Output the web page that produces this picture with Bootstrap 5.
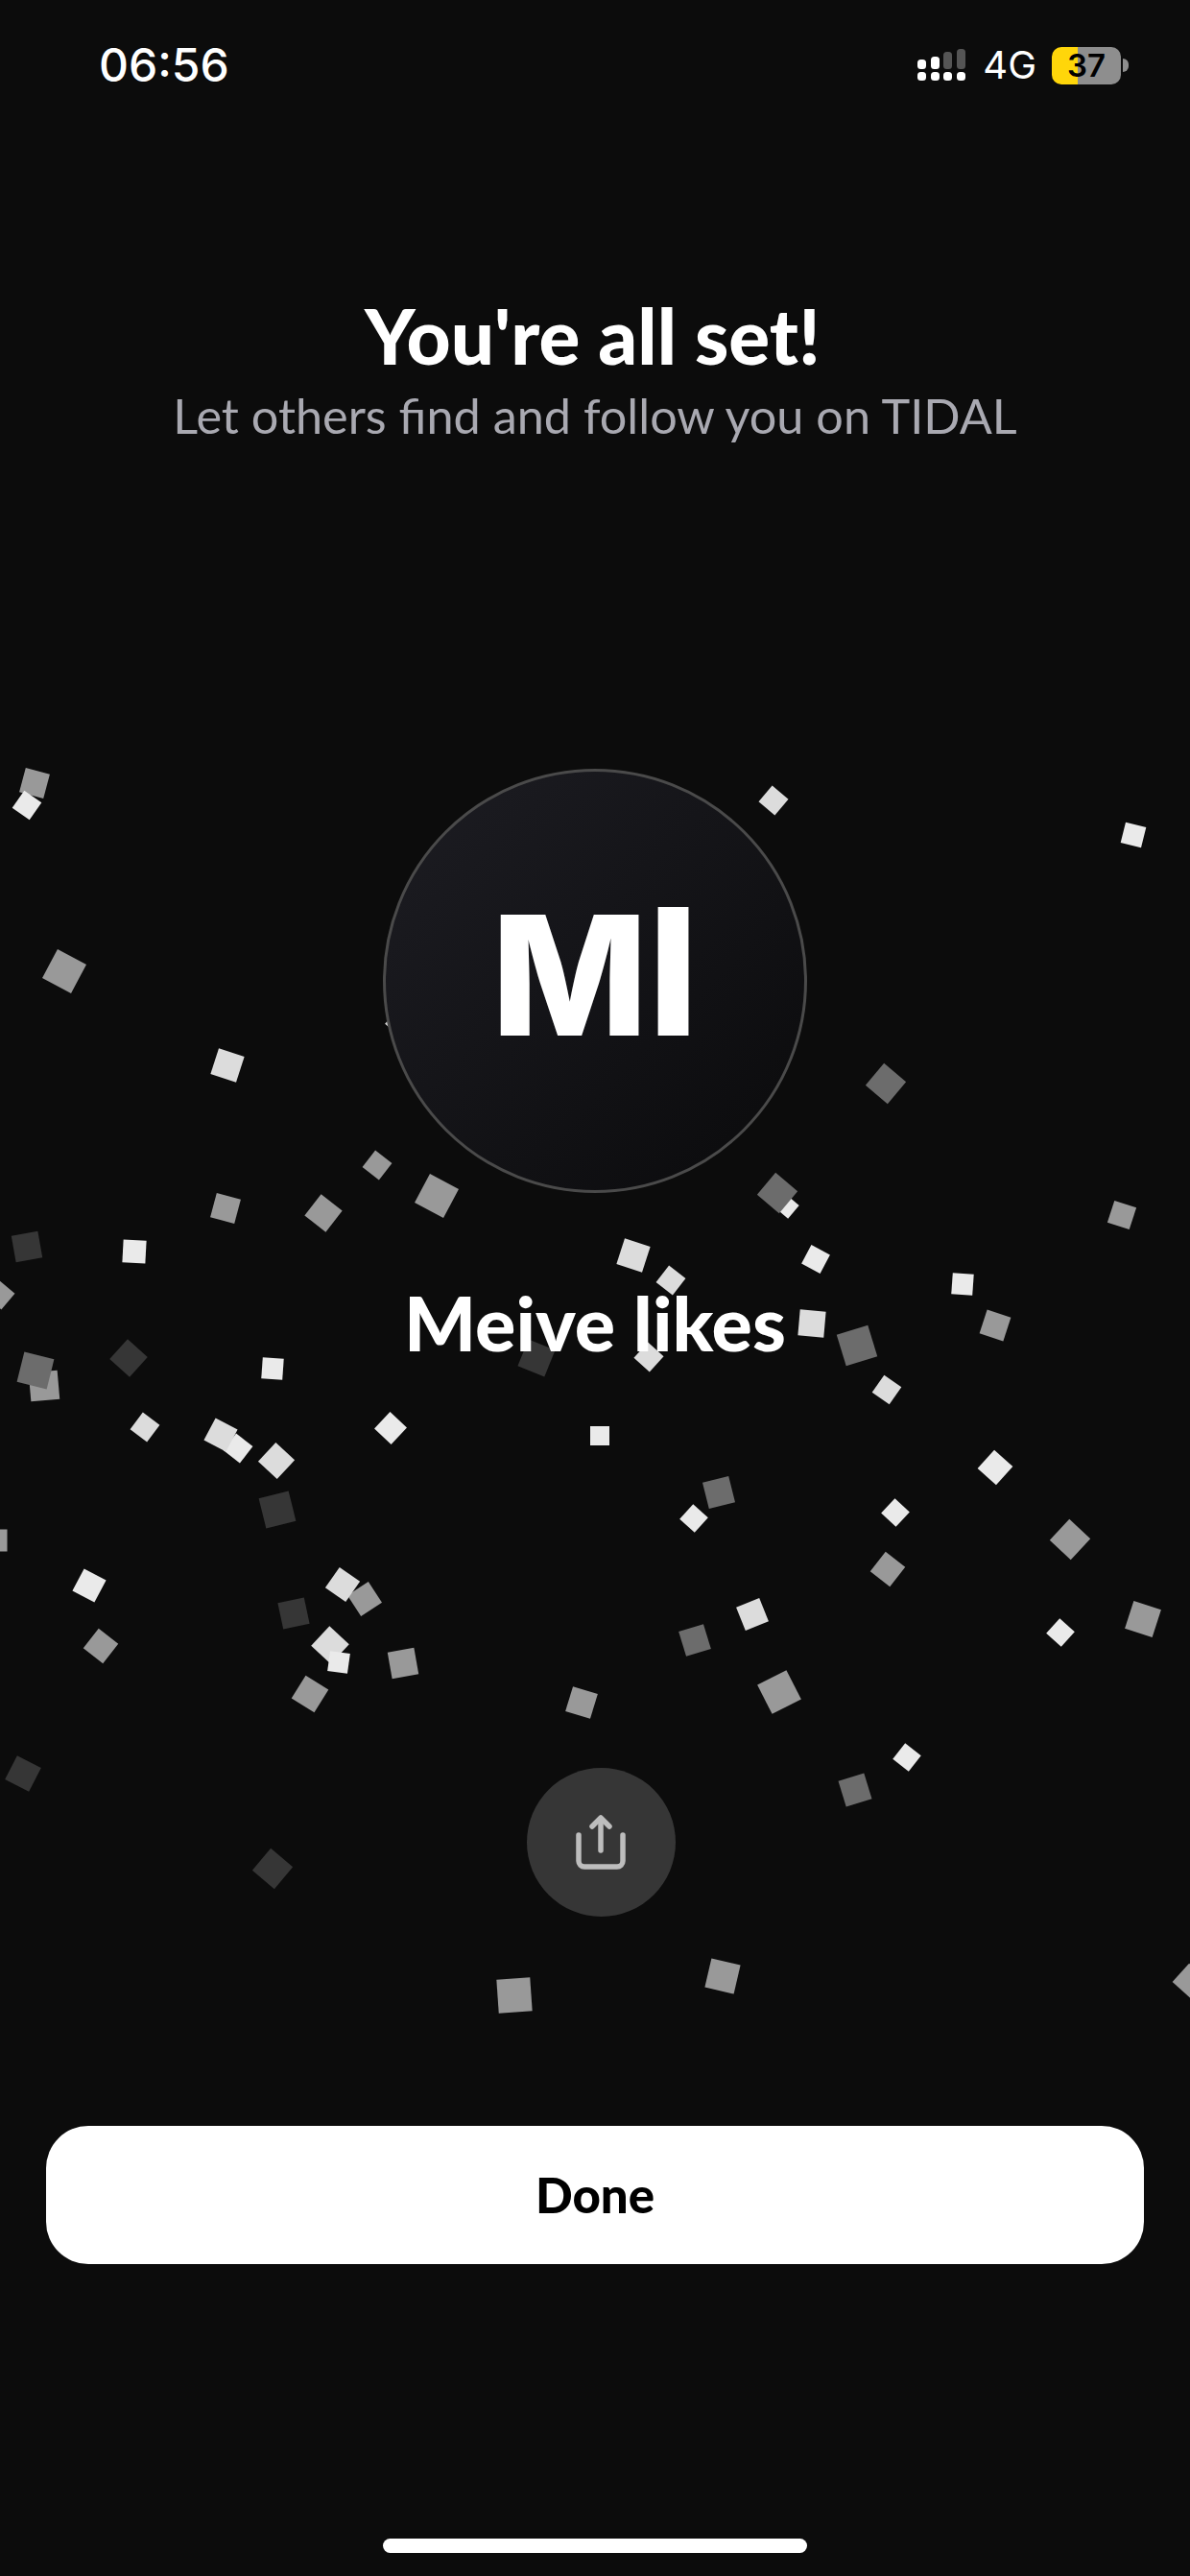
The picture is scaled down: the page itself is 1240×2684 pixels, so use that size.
<!DOCTYPE html>
<html lang="en">
<head>
  <meta charset="UTF-8" />
  <meta name="viewport" content="width=device-width, initial-scale=1.0"/>
  <title>You're all set</title>
  <link href="https://cdn.jsdelivr.net/npm/bootstrap@5.3.2/dist/css/bootstrap.min.css" rel="stylesheet" />
  <style>
    body {
      background-color: #0c0c0c;
      font-family: Lato, "Noto Sans", sans-serif;
      color: #fff;
    }

    .screen {
      width: 1240px;
      height: 2684px;
      overflow: hidden;
    }

    .confetti {
      position: absolute;
      top: 0;
      left: 0;
    }

    .content {
      position: relative;
      height: 100%;
    }

    .status-bar {
      height: 48px;
      margin-top: 44px;
      padding-left: 103px;
      padding-right: 64px;
    }

    .status-time {
      font-family: Inter, sans-serif;
      font-size: 48px;
      font-weight: 500;
      line-height: 48px;
    }

    .status-net {
      font-family: Inter, sans-serif;
      font-size: 40px;
      line-height: 48px;
      margin-left: 16px;
      margin-right: 16px;
    }

    .battery {
      width: 72px;
      height: 39px;
      border-radius: 10px;
      background: linear-gradient(90deg, #ffd60a 37%, #8e8e8e 37%);
      color: #000;
      font-family: Inter, sans-serif;
      font-size: 33px;
      font-weight: 600;
      line-height: 39px;
    }

    .battery-nub {
      width: 6px;
      height: 14px;
      margin-left: 2px;
      border-radius: 0 6px 6px 0;
      background: #8e8e8e;
    }

    .title {
      margin-top: 215px;
      padding-right: 5px;
      font-size: 80px;
      font-weight: 900;
      line-height: 84px;
    }

    .subtitle {
      margin-top: 12px;
      font-size: 50.4px;
      line-height: 60px;
      color: #a9a9b1;
    }

    .avatar {
      width: 442px;
      height: 442px;
      margin-top: 338px;
      padding-bottom: 20px;
      border: 3px solid #4a4a4a;
      background: linear-gradient(135deg, #1d1d23 0%, #0d0d0f 85%);
      font-family: Inter, sans-serif;
      font-size: 173px;
      font-weight: 800;
      line-height: 1;
    }

    .avatar-i {
      font-size: 184px;
    }

    .profile-name {
      margin-top: 92px;
      font-size: 79px;
      font-weight: 900;
      line-height: 86px;
    }

    .share-btn {
      width: 155px;
      height: 155px;
      margin-top: 421px;
      margin-left: 12px;
      background: #363636;
      border: 0;
    }

    .done-btn {
      width: 1144px;
      height: 144px;
      margin-top: 218px;
      border-radius: 44px;
      background: #fff;
      color: #000;
      font-size: 51px;
      font-weight: 900;
    }

    .done-btn:hover {
      background: #fff;
      color: #000;
    }

    .home-bar {
      width: 442px;
      height: 15px;
      margin-top: 286px;
      background: #fff;
    }
  </style>
</head>
<body>
  <div class="screen position-relative">
    <svg id="confetti" class="confetti" width="1240" height="2684" viewBox="0 0 1240 2684" aria-hidden="true"></svg>

    <div class="content d-flex flex-column align-items-center">
      <div class="status-bar w-100 d-flex align-items-center justify-content-between">
        <span class="status-time">06:56</span>
        <div class="d-flex align-items-center">
          <svg width="54" height="34" viewBox="0 0 54 34">
            <rect x="2" y="11" width="9" height="10" rx="3.5" fill="#fff"/>
            <rect x="16" y="8" width="9" height="13" rx="3.5" fill="#fff"/>
            <rect x="29" y="3" width="9" height="18" rx="3.5" fill="#555"/>
            <rect x="43" y="0" width="9" height="21" rx="3.5" fill="#555"/>
            <rect x="2" y="24" width="9" height="9" rx="3.5" fill="#fff"/>
            <rect x="16" y="24" width="9" height="9" rx="3.5" fill="#fff"/>
            <rect x="29" y="24" width="9" height="9" rx="3.5" fill="#fff"/>
            <rect x="43" y="24" width="9" height="9" rx="3.5" fill="#fff"/>
          </svg>
          <span class="status-net">4G</span>
          <div class="battery text-center">37</div>
          <div class="battery-nub"></div>
        </div>
      </div>

      <h1 class="title mb-0">You're all set!</h1>
      <p class="subtitle mb-0">Let others find and follow you on TIDAL</p>

      <div class="avatar rounded-circle d-flex align-items-center justify-content-center flex-shrink-0">
        <span>M<span class="avatar-i">I</span></span>
      </div>

      <h2 class="profile-name mb-0">Meive likes</h2>

      <button class="share-btn btn rounded-circle d-flex align-items-center justify-content-center p-0 flex-shrink-0" aria-label="Share">
        <svg width="52" height="58" viewBox="0 0 52 58" fill="none" stroke="#bdbdbd" stroke-width="5.5" stroke-linecap="round" stroke-linejoin="round">
          <path d="M3 21V48a6 6 0 0 0 6 6H43a6 6 0 0 0 6-6V21"/>
          <path d="M26 37V4"/>
          <path d="M17 12L26 3L35 12"/>
        </svg>
      </button>

      <button class="done-btn btn flex-shrink-0">Done</button>
      <div class="home-bar rounded-pill flex-shrink-0"></div>
    </div>
  </div>

  <script>
    const W = "#eaeaea", L = "#dcdcdc", G = "#999999", M = "#6c6c6c", D = "#363636";

    // x, y (centre), size, rotation, fill - in paint order
    const pieces = [
      [36,816,26,15,G],[28,839,22,35,W],[67,1012,34,28,G],[237,1110,28,18,L],[393,1214,22,38,G],
      [455,1246,34,28,G],[235,1259,26,15,G],[337,1264,28,38,G],[28,1299,28,-10,D],[140,1304,24,3,W],
      [806,834,22,40,L],[1181,870,22,14,W],[923,1129,30,40,M],[820,1257,18,40,W],[810,1243,30,40,M],
      [1169,1266,24,18,G],[660,1308,28,18,L],[850,1312,22,28,W],[699,1334,22,38,L],[1003,1338,22,4,W],
      [1037,1381,26,18,G],[846,1379,27,5,L],[893,1402,34,-17,M],[924,1448,22,35,L],[676,1414,22,42,L],
      [625,1496,20,0,W],[1037,1529,26,42,W],[749,1555,28,-14,M],[723,1582,21,42,W],[933,1576,21,43,W],
      [925,1635,26,38,G],[1115,1604,30,43,G],[784,1682,26,-22,L],[724,1709,27,-17,M],[812,1763,34,-27,G],
      [1105,1701,21,42,W],[1191,1687,30,18,G],[945,1831,21,38,W],[891,1865,28,-17,M],
      [0,1349,22,40,G],[134,1415,28,42,D],[46,1444,30,-5,G],[37,1428,32,14,M],[284,1426,22,4,W],
      [151,1487,22,37,L],[248,1509,22,38,W],[230,1495,26,28,L],[288,1522,27,43,L],[407,1488,24,43,W],
      [559,1415,30,22,D],[289,1573,32,-14,D],[-4,1605,23,0,G],[93,1652,26,28,W],[105,1715,26,38,G],
      [306,1681,28,-12,D],[380,1666,26,-33,G],[357,1651,26,35,L],[344,1714,28,43,L],[353,1732,21,8,W],
      [420,1733,28,-10,G],[323,1765,28,32,G],[606,1774,27,17,G],[24,1848,28,27,D],[284,1947,30,40,D],
      [536,2079,35,-4,G],[753,2059,31,13,G],[1240,2064,26,42,G],[411,1066,14,40,L]
    ];

    const svg = document.getElementById("confetti");
    pieces.forEach(([x, y, size, rot, fill]) => {
      const rect = document.createElementNS("http://www.w3.org/2000/svg", "rect");
      rect.setAttribute("x", x - size / 2);
      rect.setAttribute("y", y - size / 2);
      rect.setAttribute("width", size);
      rect.setAttribute("height", size);
      rect.setAttribute("fill", fill);
      rect.setAttribute("transform", `rotate(${rot} ${x} ${y})`);
      svg.appendChild(rect);
    });
  </script>
  <script src="https://cdn.jsdelivr.net/npm/bootstrap@5.3.2/dist/js/bootstrap.bundle.min.js"></script>
</body>
</html>
